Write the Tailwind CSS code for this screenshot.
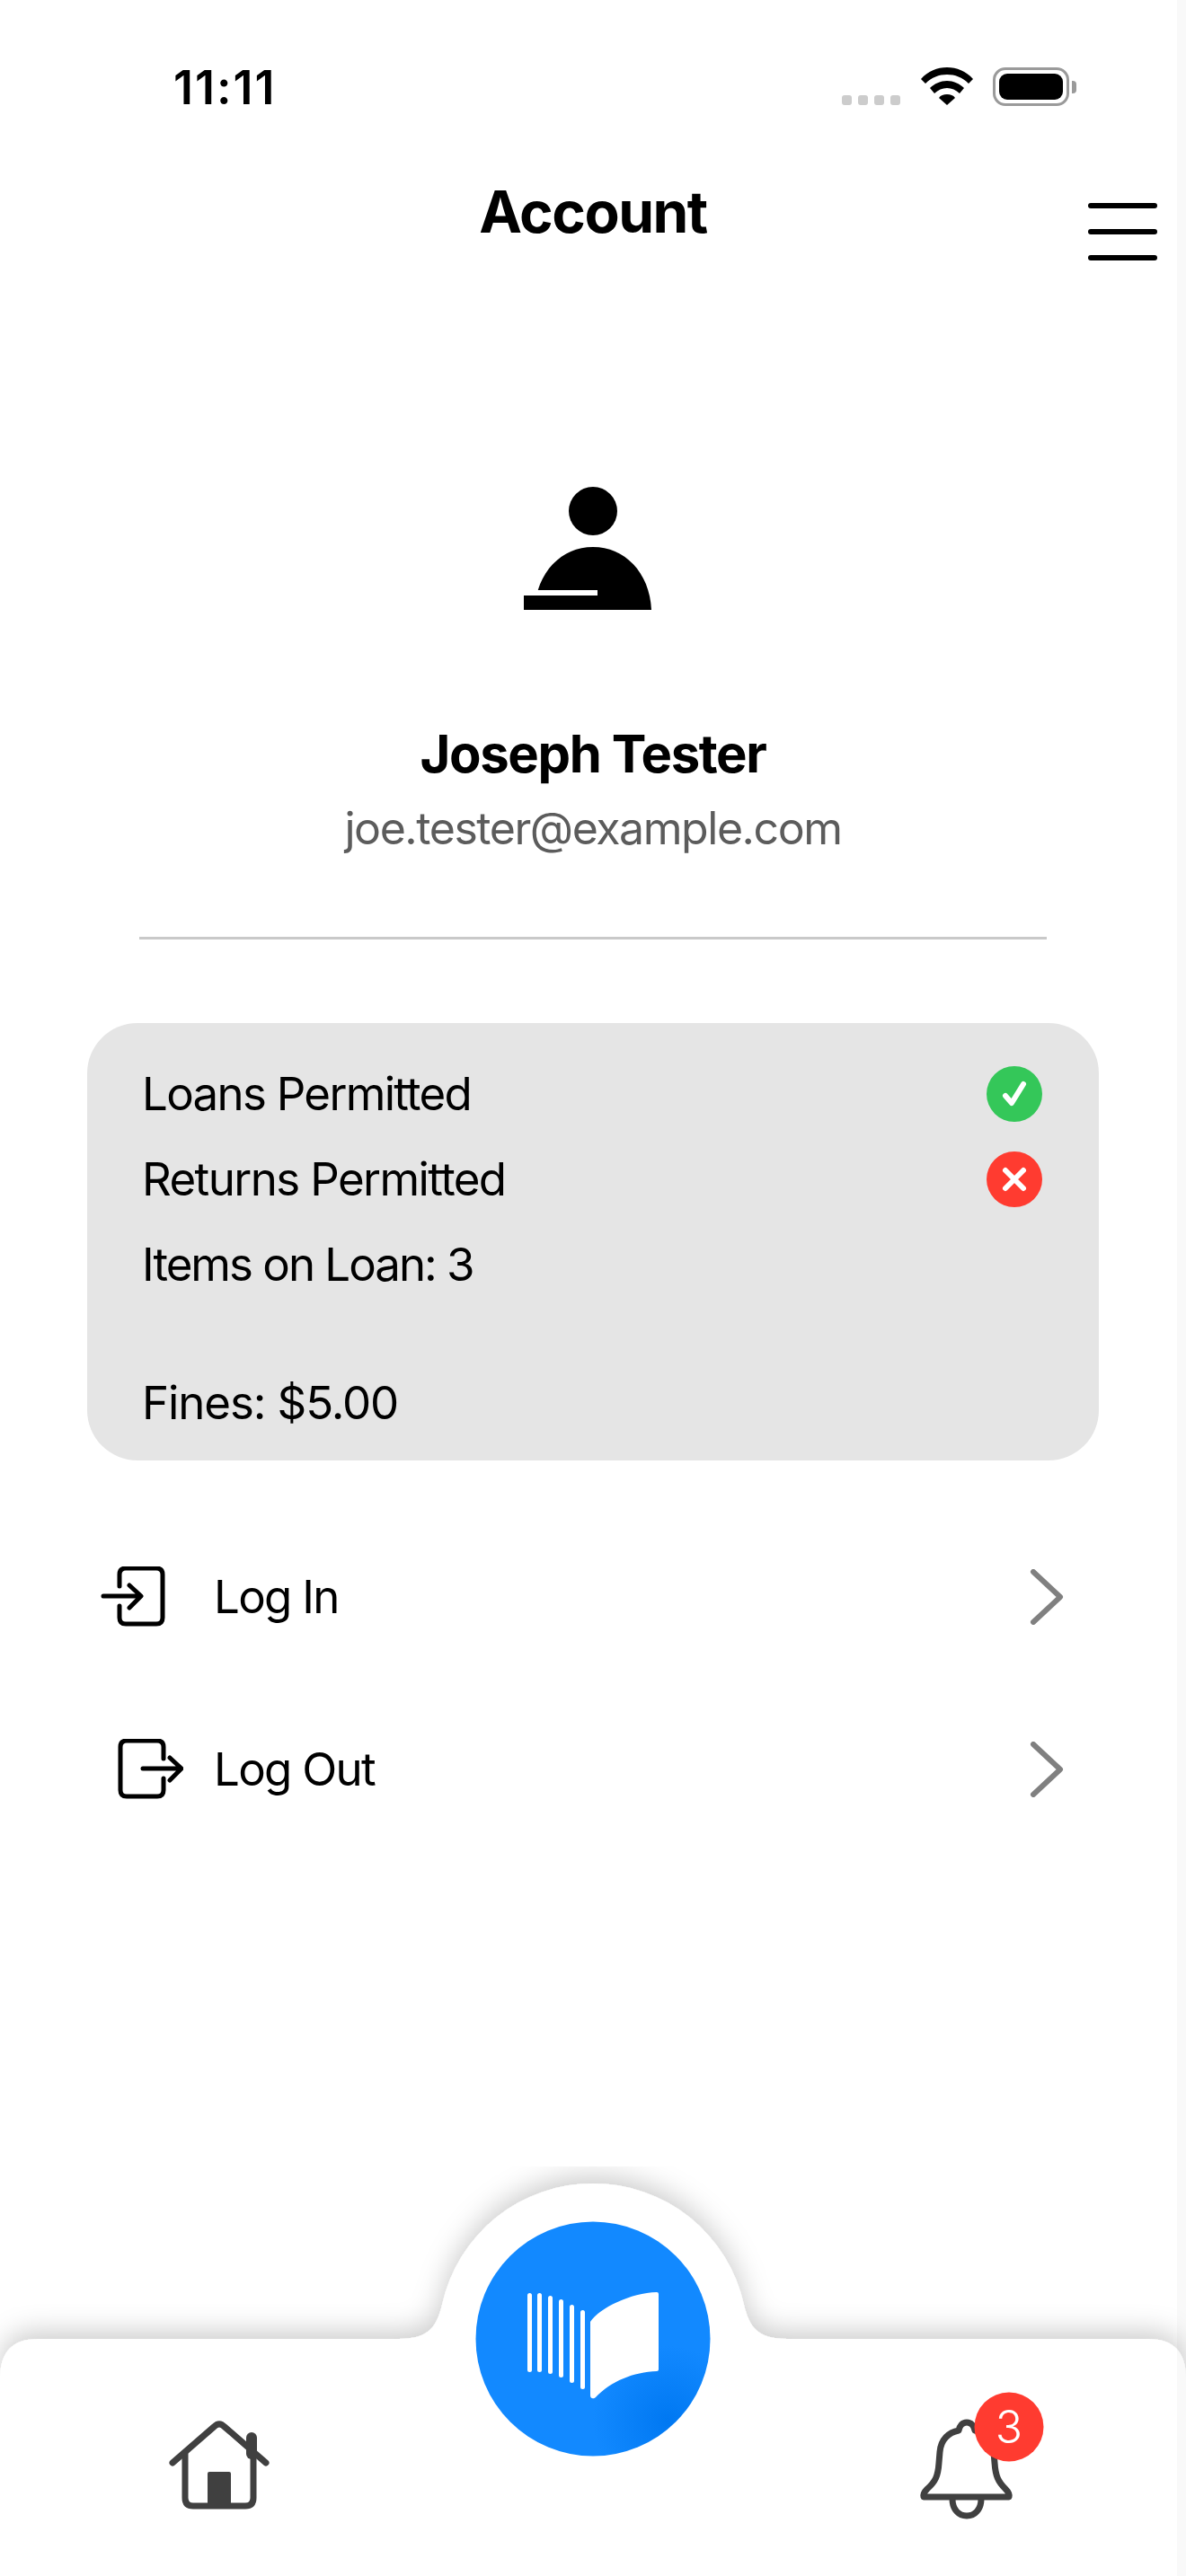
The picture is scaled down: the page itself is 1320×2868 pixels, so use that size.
<!DOCTYPE html>
<html>
<head>
<meta charset="utf-8">
<script src="https://cdn.jsdelivr.net/npm/@tailwindcss/browser@4"></script>
</head>
<body class="bg-white">
<div class="relative flex flex-col w-[1320px] h-[2868px] overflow-hidden bg-white text-black font-['Inter',sans-serif]">

  <!-- status bar -->
  <div class="relative flex items-start justify-between h-[190px] pl-[193px] pr-[122px]">
    <span class="mt-[68px] text-[52px] leading-[60px] font-semibold tracking-[2px]">11:11</span>
    <div class="flex items-start mt-[75px]">
      <div class="flex gap-[7px] mt-[31px] mr-[23px]">
        <span class="w-[11px] h-[11px] rounded-[3px] bg-[#cccccc]"></span>
        <span class="w-[11px] h-[11px] rounded-[3px] bg-[#cccccc]"></span>
        <span class="w-[11px] h-[11px] rounded-[3px] bg-[#cccccc]"></span>
        <span class="w-[11px] h-[11px] rounded-[3px] bg-[#cccccc]"></span>
      </div>
      <svg width="58" height="42" viewBox="0 0 58 42" class="mr-[22px]">
        <path d="M29 0C18 0 8 4 0 13L5 18C12 11 20 8 29 8C38 8 46 11 53 18L58 13C50 4 40 0 29 0Z" fill="#000"/>
        <path d="M29 15C22 15 15 18 10 23L15 29C19 25 24 23 29 23C34 23 39 25 43 29L48 23C43 18 36 15 29 15Z" fill="#000"/>
        <path d="M29 30C25 30 22 31 20 34L29 42L38 34C36 31 33 30 29 30Z" fill="#000"/>
      </svg>
      <div class="flex items-center">
        <div class="flex items-center justify-center w-[85px] h-[43px] rounded-[14px] border-[3px] border-[#9a9a9a]">
          <div class="w-[71px] h-[29px] rounded-[9px] bg-black"></div>
        </div>
        <div class="w-[5px] h-[14px] ml-[3px] rounded-r-[4px] bg-[#9a9a9a]"></div>
      </div>
    </div>
  </div>

  <!-- header -->
  <div class="relative grid grid-cols-[1fr_auto_1fr] items-start h-[250px]">
    <div></div>
    <h1 class="mt-[12px] text-[64px] leading-[68px] font-bold tracking-[-1.5px]">Account</h1>
    <div class="flex flex-col gap-[23px] justify-self-end mt-[36px] mr-[32px]">
      <span class="block w-[77px] h-[6px] rounded-full bg-black"></span>
      <span class="block w-[77px] h-[6px] rounded-full bg-black"></span>
      <span class="block w-[77px] h-[6px] rounded-full bg-black"></span>
    </div>
  </div>

  <!-- profile -->
  <div class="relative flex flex-col items-center">
    <svg width="154" height="137" viewBox="0 0 154 137" class="mt-[102px]">
      <circle cx="77" cy="27" r="27"/>
      <path d="M12 137C14 95 42 67 77 67C112 67 140 95 142 137Z"/>
      <rect x="0" y="121" width="82" height="16"/>
      <rect x="0" y="115" width="82" height="6" fill="#fff"/>
    </svg>
    <div class="mt-[127px] text-[58px] leading-[66px] font-bold tracking-[-1.4px]">Joseph Tester</div>
    <div class="mt-[21px] text-[50px] leading-[58px] text-[#5c5c5c] tracking-[-1.45px]">joe.tester@example.com</div>
    <div class="w-[1010px] h-[3px] mt-[92px] bg-[#c9c9c9]"></div>
  </div>

  <!-- status card -->
  <div class="relative flex flex-col w-[1126px] h-[487px] mx-auto mt-[93px] pt-[31px] pl-[61px] pr-[63px] rounded-[56px] bg-[#e5e5e5] text-[51px] leading-[95px]">
    <div class="flex items-center justify-between h-[95px]">
      <span class="tracking-[-1.7px]">Loans Permitted</span>
      <svg width="62" height="62" viewBox="0 0 62 62"><circle cx="31" cy="31" r="31" fill="#34c759"/><path d="M21 33L28 41L41 20" fill="none" stroke="#fff" stroke-width="6" stroke-linecap="round" stroke-linejoin="round"/></svg>
    </div>
    <div class="flex items-center justify-between h-[95px]">
      <span class="tracking-[-1.6px]">Returns Permitted</span>
      <svg width="62" height="62" viewBox="0 0 62 62"><circle cx="31" cy="31" r="31" fill="#ff3b30"/><path d="M21 21L41 41M41 21L21 41" fill="none" stroke="#fff" stroke-width="6" stroke-linecap="round"/></svg>
    </div>
    <div class="flex items-center h-[95px] tracking-[-2px]">Items on Loan: 3</div>
    <div class="flex items-center h-[95px] mt-[59px] tracking-[-1.1px]">Fines: $5.00</div>
  </div>

  <!-- actions -->
  <div class="relative flex flex-col mt-[88px] pl-[112px] pr-[136px] text-[51px] tracking-[-1.7px]">
    <div class="flex items-center h-[128px]">
      <svg width="72" height="68" viewBox="0 0 72 68" class="shrink-0">
        <path d="M21 22V9Q21 2 28 2H62Q69 2 69 9V57Q69 64 62 64H28Q21 64 21 57V44" fill="none" stroke="#000" stroke-width="5" stroke-linecap="round"/>
        <path d="M3 33H44M32 21L45 33L32 46" fill="none" stroke="#000" stroke-width="5" stroke-linecap="round" stroke-linejoin="round"/>
      </svg>
      <span class="ml-[54px] grow">Log In</span>
      <svg width="38" height="62" viewBox="0 0 38 62"><path d="M4 3L34 31L4 59" fill="none" stroke="#808080" stroke-width="6" stroke-linecap="round" stroke-linejoin="round"/></svg>
    </div>
    <div class="flex items-center h-[128px] mt-[64px]">
      <svg width="92" height="68" viewBox="0 0 92 68" class="shrink-0">
        <path d="M70 22V9Q70 2 63 2H29Q22 2 22 9V57Q22 64 29 64H63Q70 64 70 57V44" fill="none" stroke="#000" stroke-width="5" stroke-linecap="round"/>
        <path d="M47 33H89M77 21L90 33L77 46" fill="none" stroke="#000" stroke-width="5" stroke-linecap="round" stroke-linejoin="round"/>
      </svg>
      <span class="ml-[34px] grow">Log Out</span>
      <svg width="38" height="62" viewBox="0 0 38 62"><path d="M4 3L34 31L4 59" fill="none" stroke="#808080" stroke-width="6" stroke-linecap="round" stroke-linejoin="round"/></svg>
    </div>
  </div>

  <!-- bottom nav -->
  <div class="relative mt-auto h-[456px]">
    <svg class="absolute inset-0" width="1320" height="456" viewBox="0 2412 1320 456">
      <defs>
        <filter id="s" x="-10%" y="-30%" width="120%" height="160%">
          <feDropShadow dx="0" dy="-8" stdDeviation="15" flood-color="#000" flood-opacity="0.2"/>
        </filter>
        <radialGradient id="b" cx="0.82" cy="0.85" r="0.32">
          <stop offset="0" stop-color="#0078f2"/>
          <stop offset="1" stop-color="#1289ff"/>
        </radialGradient>
      </defs>
      <path filter="url(#s)" fill="#fff" d="M0 2900V2648Q0 2604 42 2604H444C478 2604 486 2590 492 2566A172 172 0 0 1 828 2566C834 2590 842 2604 876 2604H1278Q1320 2604 1320 2648V2900Z"/>
      <circle cx="660" cy="2604" r="130.5" fill="url(#b)"/>
      <g fill="#fff">
        <rect x="587" y="2553" width="5" height="88" rx="2.5"/>
        <rect x="598" y="2553" width="5" height="88" rx="2.5"/>
        <rect x="610" y="2556" width="5" height="87" rx="2.5"/>
        <rect x="622" y="2560" width="5" height="87" rx="2.5"/>
        <rect x="634" y="2566" width="5" height="87" rx="2.5"/>
        <rect x="646" y="2572" width="5" height="88" rx="2.5"/>
        <path d="M657 2585C668 2569 702 2553 731 2552Q733 2552 733 2554V2638Q733 2640 731 2640C705 2641 680 2651 663 2669C661 2671 657 2671 657 2667Z"/>
      </g>
      <g fill="none" stroke="#404040" stroke-width="7" stroke-linecap="round" stroke-linejoin="round">
        <path d="M192 2742L238 2702Q244 2696 250 2702L296 2742"/>
        <path d="M206 2732V2781Q206 2790 215 2790H273Q282 2790 282 2781V2732"/>
      </g>
      <rect x="231" y="2752" width="26" height="38" rx="2" fill="#404040"/>
      <path d="M280 2714V2732" stroke="#404040" stroke-width="12" stroke-linecap="round"/>
      <path fill="none" stroke="#404040" stroke-width="7" stroke-linecap="round" stroke-linejoin="round" d="M1028 2780H1123Q1124 2776 1119 2771C1111 2763 1108 2757 1107 2742L1106 2730C1104 2716 1096 2708 1085 2706C1084 2701 1081 2697 1076 2697C1071 2697 1068 2701 1067 2706C1056 2708 1047 2716 1046 2730L1045 2742C1044 2757 1041 2763 1032 2771Q1027 2776 1028 2780Z"/>
      <path fill="none" stroke="#404040" stroke-width="7" d="M1060 2780V2782C1060 2794 1067 2801 1076 2801C1085 2801 1092 2794 1092 2782V2780"/>
      <circle cx="1123" cy="2702" r="38.5" fill="#ff3b30"/>
    </svg>
    <span class="absolute left-[1084px] top-[260px] w-[78px] text-center text-[50px] leading-[60px] font-light text-white">3</span>
  </div>

  <div class="absolute top-0 right-0 w-[10px] h-full bg-black/[0.025]"></div>
</div>
</body>
</html>
